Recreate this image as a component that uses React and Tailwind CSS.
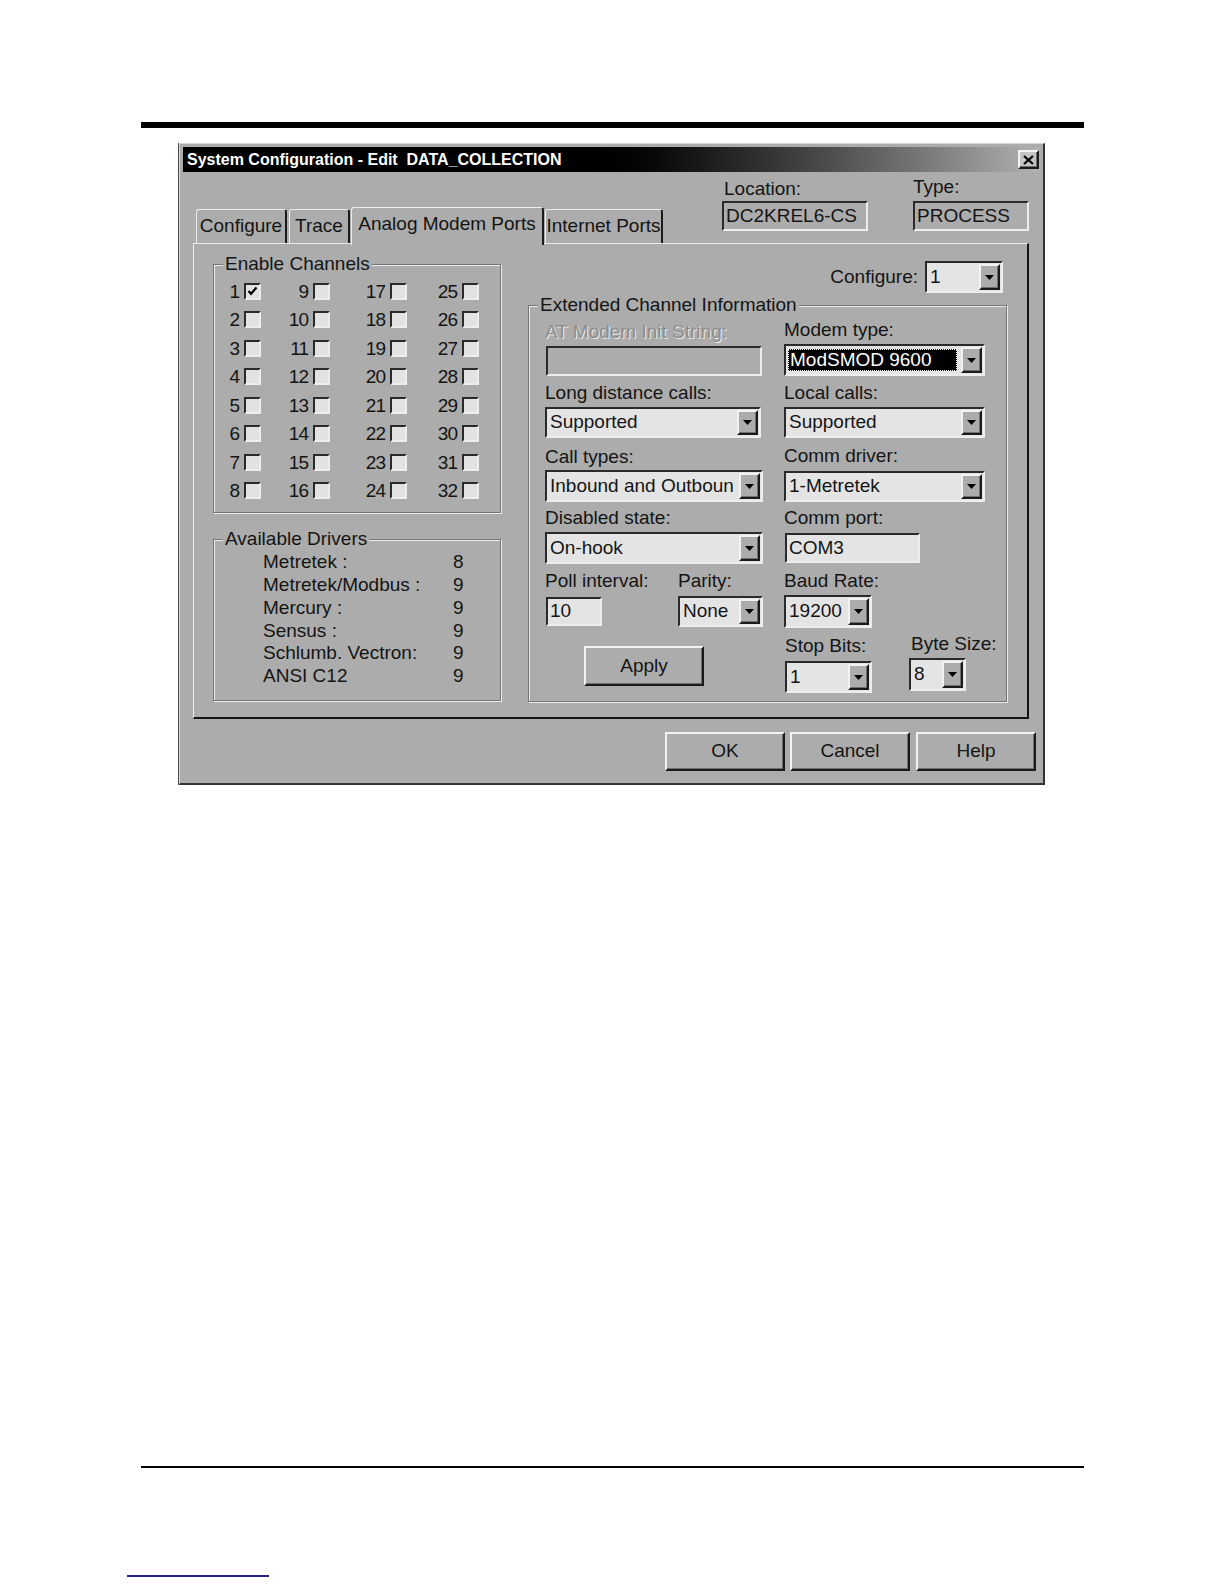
import React from "react";

const SUNK =
  "border-2 border-t-[#2a2a2a] border-l-[#2a2a2a] border-r-[#ededed] border-b-[#ededed]";
const RAISED =
  "border-2 border-t-[#f2f2f2] border-l-[#f2f2f2] border-r-[#1a1a1a] border-b-[#1a1a1a] shadow-[inset_-1px_-1px_0_#6e6e6e]";
const GROUP =
  "border border-[#767676] shadow-[1px_1px_0_#ececec,inset_1px_1px_0_#ececec]";
const LEGEND = "ml-[9px] px-[2px] leading-[22px] bg-[#acacac] relative";

function Arrow() {
  return (
    <svg width="9" height="5" viewBox="0 0 9 5">
      <polygon points="0,0 9,0 4.5,5" fill="#000" />
    </svg>
  );
}

function Combo({ cls, text, sel }) {
  return (
    <div className={`${SUNK} bg-[#e4e4e4] flex items-stretch shrink-0 ${cls}`}>
      <div className="flex-1 flex items-center pl-[2px] pr-[4px] overflow-hidden whitespace-nowrap">
        {sel ? (
          <div className="bg-black text-white w-full h-[22px] flex items-center pl-[2px] outline-1 outline-dotted outline-white -outline-offset-1">
            {text}
          </div>
        ) : (
          <span className="pl-[1px]">{text}</span>
        )}
      </div>
      <div
        className={`w-[21px] shrink-0 my-[1px] mr-[1px] ${RAISED} bg-[#acacac] flex items-center justify-center`}
      >
        <Arrow />
      </div>
    </div>
  );
}

function Field({ cls, text, gray }) {
  return (
    <div
      className={`${SUNK} ${gray ? "bg-[#acacac]" : "bg-[#e4e4e4]"} flex items-center pl-[2px] whitespace-nowrap shrink-0 ${cls}`}
    >
      {text}
    </div>
  );
}

function Check({ on }) {
  return (
    <div className={`w-[17px] h-[17px] ${SUNK} bg-[#e2e2e2] flex items-center justify-center`}>
      {on && (
        <svg width="11" height="10" viewBox="0 0 11 10">
          <path d="M1.5 5 L4 7.8 L9.5 1.5" stroke="#000" strokeWidth="2.2" fill="none" />
        </svg>
      )}
    </div>
  );
}

function Btn({ cls, children }) {
  return (
    <div className={`${RAISED} bg-[#acacac] flex items-center justify-center shrink-0 ${cls}`}>
      {children}
    </div>
  );
}

function Tab({ cls, children }) {
  return (
    <div
      className={`border-t border-l border-t-[#ececec] border-l-[#ececec] border-r-2 border-r-[#1a1a1a] rounded-t-[3px] flex items-center justify-center whitespace-nowrap ${cls}`}
    >
      {children}
    </div>
  );
}

const CELL_W = ["w-[47px]", "w-[69px]", "w-[77px]", "w-[72px]"];

export default function App() {
  const rows = [0, 1, 2, 3, 4, 5, 6, 7];
  const drivers = [
    ["Metretek :", "8"],
    ["Metretek/Modbus :", "9"],
    ["Mercury :", "9"],
    ["Sensus :", "9"],
    ["Schlumb. Vectron:", "9"],
    ["ANSI C12", "9"],
  ];
  return (
    <div
      className="w-[1224px] h-[1584px] bg-white overflow-hidden text-[19px] text-[#141414]"
      style={{ fontFamily: '"Liberation Sans", Arial, sans-serif' }}
    >
      <div className="pt-[122px]">
        <div className="ml-[141px] w-[943px] h-[6px] bg-black" />

        {/* Dialog */}
        <div className="ml-[178px] mt-[15px] w-[867px] h-[642px] border-l border-[#4a4a4a]">
          <div className="h-full border-t border-l border-t-[#d8d8d8] border-l-[#d8d8d8] border-r-2 border-b-2 border-r-[#333] border-b-[#333] bg-[#acacac] p-[3px]">
            {/* Title bar */}
            <div className="h-[25px] bg-linear-to-r from-black from-45% to-[#b2b2b2] flex items-center justify-between pl-[4px] pr-[1px]">
              <span className="text-white font-bold text-[16px] whitespace-pre leading-none">
                System Configuration - Edit  DATA_COLLECTION
              </span>
              <div className={`w-[21px] h-[19px] ${RAISED} bg-[#c4c4c4] flex items-center justify-center`}>
                <svg width="11" height="10" viewBox="0 0 11 10">
                  <path d="M1 1 L10 9 M10 1 L1 9" stroke="#000" strokeWidth="2.2" />
                </svg>
              </div>
            </div>

            {/* Header: tabs + location/type */}
            <div className="flex h-[71px]">
              <div className="ml-[13px] flex items-end">
                <Tab cls="w-[91px] h-[34px]">Configure</Tab>
                <Tab cls="ml-[2px] w-[61px] h-[34px]">Trace</Tab>
                <div className="ml-[1px] w-[193px] h-[38px] -mb-[2px] relative z-10 bg-[#acacac] border-t border-l border-t-[#ececec] border-l-[#ececec] border-r-2 border-r-[#1a1a1a] rounded-t-[3px] flex items-center justify-center pb-[5px] whitespace-nowrap">
                  Analog Modem Ports
                </div>
                <Tab cls="ml-[1px] w-[118px] h-[34px]">Internet Ports</Tab>
              </div>
              <div className="ml-[59px] mt-[6px] flex flex-col">
                <div className="h-[22px] leading-[22px] pl-[2px]">Location:</div>
                <Field cls="mt-[1px] w-[146px] h-[30px]" text="DC2KREL6-CS" gray />
              </div>
              <div className="ml-[45px] mt-[4px] flex flex-col">
                <div className="h-[22px] leading-[22px]">Type:</div>
                <Field cls="mt-[3px] w-[116px] h-[30px]" text="PROCESS" gray />
              </div>
            </div>

            {/* Tab panel */}
            <div className="ml-[10px] w-[836px] h-[476px] border-t border-l border-t-[#ececec] border-l-[#ececec] border-r-2 border-b-2 border-r-[#141414] border-b-[#141414] flex">
              {/* Left column */}
              <div className="w-[307px] pl-[19px] shrink-0">
                <fieldset className={`mt-[9px] w-[288px] h-[260px] ${GROUP}`}>
                  <legend className={LEGEND}>Enable Channels</legend>
                  <div className="mt-[2px]">
                    {rows.map((r) => (
                      <div key={r} className="flex h-[28.5px] items-center">
                        {[0, 1, 2, 3].map((c) => (
                          <div key={c} className={`${CELL_W[c]} flex items-center justify-end`}>
                            <span className="mr-[5px] tracking-[-1px] leading-none">
                              {r + 1 + c * 8}
                            </span>
                            <Check on={r === 0 && c === 0} />
                          </div>
                        ))}
                      </div>
                    ))}
                  </div>
                </fieldset>

                <fieldset className={`mt-[15px] w-[288px] h-[173px] ${GROUP}`}>
                  <legend className={LEGEND}>Available Drivers</legend>
                  <div className="mt-[1px] pl-[49px]">
                    {drivers.map(([n, v]) => (
                      <div key={n} className="flex h-[22.8px] items-center">
                        <span className="w-[190px]">{n}</span>
                        <span>{v}</span>
                      </div>
                    ))}
                  </div>
                </fieldset>
              </div>

              {/* Right column */}
              <div className="ml-[27px] w-[479px] shrink-0">
                <div className="mt-[17px] h-[32px] flex justify-end items-center pr-[4px]">
                  <span>Configure:</span>
                  <Combo cls="ml-[7px] w-[78px] h-[32px]" text="1" />
                </div>

                <fieldset className={`mt-[1px] w-[479px] h-[408px] ${GROUP}`}>
                  <legend className={LEGEND}>Extended Channel Information</legend>
                  <div className="flex pl-[16px]">
                    {/* left */}
                    <div className="w-[218px] shrink-0 flex flex-col">
                      <div className="mt-[5px] h-[22px] leading-[22px] whitespace-nowrap text-[#8c8c8c] [text-shadow:1px_1px_0_#ececec]">
                        AT Modem Init String:
                      </div>
                      <Field cls="mt-[3px] ml-[1px] w-[216px] h-[30px]" text="" gray />
                      <div className="mt-[6px] h-[22px] leading-[22px] whitespace-nowrap">Long distance calls:</div>
                      <Combo cls="mt-[3px] w-[216px] h-[31px]" text="Supported" />
                      <div className="mt-[8px] h-[22px] leading-[22px]">Call types:</div>
                      <Combo cls="mt-[2px] w-[218px] h-[32px]" text="Inbound and Outboun" />
                      <div className="mt-[5px] h-[22px] leading-[22px]">Disabled state:</div>
                      <Combo cls="mt-[3px] w-[218px] h-[32px]" text="On-hook" />
                      <div className="mt-[6px] h-[22px] leading-[22px] flex whitespace-nowrap">
                        <span className="w-[133px] shrink-0">Poll interval:</span>
                        <span>Parity:</span>
                      </div>
                      <div className="mt-[4px] flex items-start">
                        <Field cls="mt-[1px] ml-[1px] w-[56px] h-[29px]" text="10" />
                        <Combo cls="ml-[76px] w-[85px] h-[31px]" text="None" />
                      </div>
                      <Btn cls="mt-[19px] ml-[39px] w-[120px] h-[40px]">Apply</Btn>
                    </div>

                    {/* right */}
                    <div className="ml-[21px] w-[222px] shrink-0 flex flex-col">
                      <div className="mt-[3px] h-[22px] leading-[22px]">Modem type:</div>
                      <Combo cls="mt-[3px] w-[201px] h-[32px]" text="ModSMOD 9600" sel />
                      <div className="mt-[6px] h-[22px] leading-[22px]">Local calls:</div>
                      <Combo cls="mt-[3px] w-[201px] h-[31px]" text="Supported" />
                      <div className="mt-[7px] h-[22px] leading-[22px]">Comm driver:</div>
                      <Combo cls="mt-[4px] w-[201px] h-[31px]" text="1-Metretek" />
                      <div className="mt-[5px] h-[22px] leading-[22px]">Comm port:</div>
                      <Field cls="mt-[4px] ml-[1px] w-[135px] h-[30px]" text="COM3" />
                      <div className="mt-[7px] h-[22px] leading-[22px]">Baud Rate:</div>
                      <Combo cls="mt-[3px] w-[88px] h-[33px]" text="19200" />
                      <div className="flex">
                        <div className="w-[125px] shrink-0 flex flex-col">
                          <div className="mt-[7px] h-[22px] leading-[22px] pl-[1px] whitespace-nowrap">Stop Bits:</div>
                          <Combo cls="mt-[4px] ml-[1px] w-[87px] h-[32px]" text="1" />
                        </div>
                        <div className="shrink-0 flex flex-col">
                          <div className="mt-[5px] h-[22px] leading-[22px] pl-[2px] whitespace-nowrap">Byte Size:</div>
                          <Combo cls="mt-[3px] w-[57px] h-[33px]" text="8" />
                        </div>
                      </div>
                    </div>
                  </div>
                </fieldset>
              </div>
            </div>

            {/* Dialog buttons */}
            <div className="mt-[13px] flex justify-end pr-[4px]">
              <Btn cls="w-[120px] h-[39px]">OK</Btn>
              <Btn cls="ml-[5px] w-[120px] h-[39px]">Cancel</Btn>
              <Btn cls="ml-[6px] w-[120px] h-[39px]">Help</Btn>
            </div>
          </div>
        </div>

        {/* Footer */}
        <div className="ml-[141px] mt-[681px] w-[943px] h-[2px] bg-black" />
        <div className="ml-[127px] mt-[107px] w-[142px] h-[2px] bg-[#23238a]" />
      </div>
    </div>
  );
}
